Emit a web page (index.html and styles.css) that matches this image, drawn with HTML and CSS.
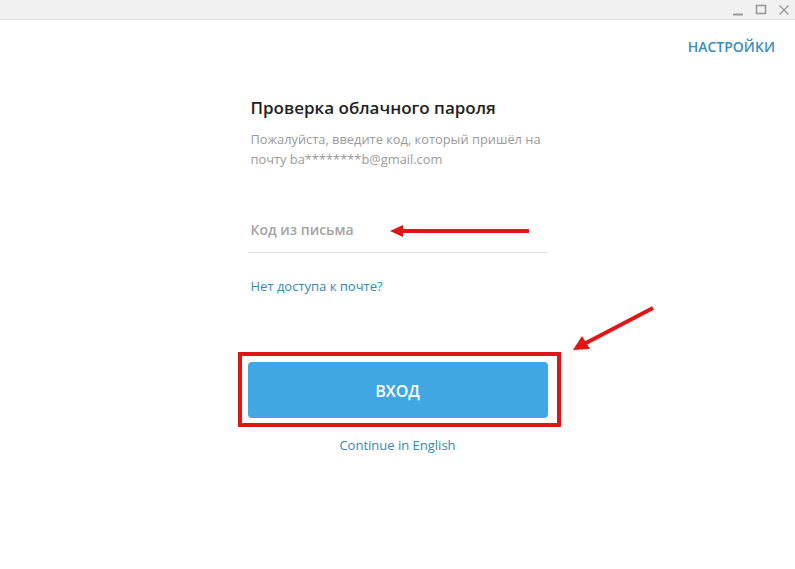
FILE: index.html
```html
<!DOCTYPE html>
<html lang="ru">
<head>
  <meta charset="UTF-8" />
  <meta name="viewport" content="width=device-width, initial-scale=1" />
  <title>Telegram</title>
  <link rel="stylesheet" href="styles.css">
</head>
<body>
  <div class="titlebar">
    <svg class="win-btn" width="12" height="12" viewBox="0 0 12 12"><path d="M1 10.5h10" stroke="#9a9a9a" stroke-width="2"/></svg>
    <svg class="win-btn" width="12" height="12" viewBox="0 0 12 12"><rect x="1.5" y="1.5" width="9" height="8" fill="none" stroke="#9a9a9a" stroke-width="1.6"/></svg>
    <svg class="win-btn" width="12" height="12" viewBox="0 0 12 12"><path d="M1.5 1.5l9 9M10.5 1.5l-9 9" stroke="#9a9a9a" stroke-width="1.4"/></svg>
  </div>

  <div class="topbar">
    <a class="settings" href="#">НАСТРОЙКИ</a>
  </div>

  <div class="form">
    <h1>Проверка облачного пароля</h1>
    <p class="hint">Пожалуйста, введите код, который пришёл на почту ba********b@gmail.com</p>

    <input class="code" type="text" placeholder="Код из письма" />

    <a class="link" href="#">Нет доступа к почте?</a>

    <div class="highlight">
      <button class="submit">ВХОД</button>
    </div>

    <a class="lang" href="#">Continue in English</a>
  </div>

  <svg class="arrows" width="795" height="569" viewBox="0 0 795 569">
    <line x1="529" y1="231" x2="400" y2="231" stroke="#e01515" stroke-width="4" />
    <polygon points="390,231 403,225 403,237" fill="#e01515" />
    <line x1="653" y1="308" x2="585" y2="343.5" stroke="#e01515" stroke-width="4" />
    <polygon points="573,350 590,349 582,336" fill="#e01515" />
  </svg>
</body>
</html>
```

FILE: styles.css
```css
body {
  margin: 0;
  font-family: 'Open Sans', 'Noto Sans', sans-serif;
  background: white;
  color: #222;
  position: relative;
  height: 569px;
  overflow: hidden;
}

.titlebar {
  height: 19px;
  background: #f1f1f1;
  border-bottom: 1px solid #e2e2e2;
  display: flex;
  justify-content: flex-end;
  align-items: center;
  gap: 11px;
  padding-right: 5px;
}

.topbar {
  display: flex;
  justify-content: flex-end;
  padding: 17px 20px 0;
}

.settings {
  font-size: 14px;
  line-height: 20px;
  font-weight: 600;
  color: #3a8cbb;
  text-decoration: none;
}

.form {
  width: 300px;
  margin: 0 auto;
  padding-top: 40px;
  display: flex;
  flex-direction: column;
}

h1 {
  margin: 0;
  padding-left: 3px;
  font-size: 17px;
  line-height: 22px;
  font-weight: 600;
  color: #222;
}

.hint {
  margin: 10px 0 0;
  padding-left: 3px;
  font-size: 12.85px;
  line-height: 20px;
  color: #9a9a9a;
}

.code {
  margin-top: 40px;
  height: 20px;
  padding: 10px 3px 13px;
  border: none;
  border-bottom: 1px solid #e3e3e3;
  font-family: inherit;
  font-size: 14px;
  font-weight: 600;
  outline: none;
}

.code::placeholder {
  color: #a3a3a3;
}

.link {
  margin-top: 23px;
  padding-left: 3px;
  font-size: 13px;
  line-height: 20px;
  color: #3388bb;
  text-decoration: none;
}

.highlight {
  position: relative;
  margin-top: 66px;
}

.highlight::after {
  content: "";
  position: absolute;
  top: -10px;
  left: -10px;
  right: -13px;
  bottom: -9px;
  border: 4px solid #dd1717;
}

.submit {
  width: 100%;
  height: 56px;
  border: none;
  border-radius: 4px;
  background: #40a7e3;
  color: white;
  font-family: inherit;
  font-size: 16px;
  font-weight: 600;
  padding-top: 2px;
  cursor: pointer;
}

.lang {
  margin-top: 17px;
  align-self: center;
  font-size: 13px;
  line-height: 20px;
  color: #3388bb;
  text-decoration: none;
}

.arrows {
  position: absolute;
  top: 0;
  left: 0;
  pointer-events: none;
}
```
